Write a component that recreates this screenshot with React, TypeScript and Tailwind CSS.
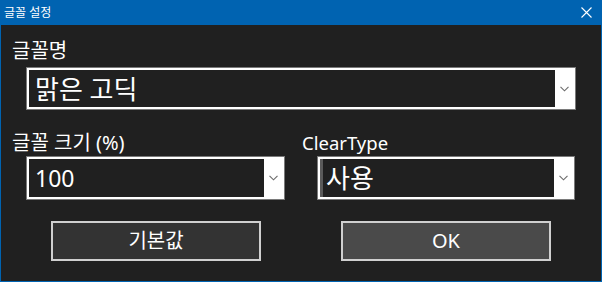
import React from "react";

const font = { fontFamily: '"Noto Sans", "Noto Sans CJK KR", sans-serif' };

function Chevron() {
  return (
    <svg width="9" height="6" viewBox="0 0 9 6" fill="none">
      <path d="M0.5 0.8 L4.5 4.8 L8.5 0.8" stroke="#6b6b6b" strokeWidth="1.1" />
    </svg>
  );
}

function Combo({
  text,
  className,
  textClass,
  strip,
}: {
  text: string;
  className: string;
  textClass: string;
  strip?: boolean;
}) {
  return (
    <div className={`flex border border-[#7a7a7a] bg-white p-[2px] ${className}`}>
      <div className="flex flex-1 items-center bg-[#202020]">
        {strip && <div className="h-full w-[3px] bg-[#5a5a5a]" />}
        <span className={`text-white ${textClass}`}>{text}</span>
      </div>
      <div className="flex w-[18px] items-center justify-center">
        <Chevron />
      </div>
    </div>
  );
}

function Button({ label, className }: { label: string; className: string }) {
  return (
    <div
      className={`flex h-[40px] w-[210px] items-center justify-center border-2 border-[#d0d0d0] text-[20px] leading-none text-white ${className}`}
    >
      {label}
    </div>
  );
}

export default function App() {
  return (
    <div className="h-[282px] w-[602px] overflow-hidden bg-[#0063b1]" style={font}>
      <div className="flex h-[25px] items-center justify-between pl-[4px] pr-[10px]">
        <span className="text-[12px] leading-none text-white">글꼴 설정</span>
        <svg width="11" height="11" viewBox="0 0 11 11">
          <path d="M0.5 0.5 L10.5 10.5 M10.5 0.5 L0.5 10.5" stroke="white" strokeWidth="1.1" />
        </svg>
      </div>
      <div className="mx-[1px] flex h-[256px] flex-col bg-[#202020]">
        <div className="ml-[11px] mt-[15px] h-[22px] text-[20px] leading-[22px] text-white">글꼴명</div>
        <Combo
          text="맑은 고딕"
          className="ml-[25px] mt-[5px] h-[43px] w-[550px]"
          textClass="pl-[6px] text-[26px] leading-none"
        />
        <div className="mt-[22px] flex">
          <div className="flex w-[290px] flex-col">
            <div className="ml-[11px] h-[22px] text-[20px] leading-[22px] text-white">글꼴 크기 (%)</div>
            <Combo
              text="100"
              className="ml-[25px] mt-[2px] h-[44px] w-[259px]"
              textClass="pl-[6px] text-[23px] leading-none"
            />
          </div>
          <div className="flex flex-col">
            <div className="ml-[11px] h-[22px] text-[18.5px] leading-[22px] text-white">ClearType</div>
            <Combo
              text="사용"
              className="ml-[26px] mt-[2px] h-[44px] w-[258px]"
              textClass="pl-[3px] text-[26px] leading-none"
              strip
            />
          </div>
        </div>
        <div className="mt-[21px] flex">
          <Button label="기본값" className="ml-[50px] bg-[#333333]" />
          <Button label="OK" className="ml-[80px] bg-[#4a4a4a]" />
        </div>
      </div>
    </div>
  );
}
